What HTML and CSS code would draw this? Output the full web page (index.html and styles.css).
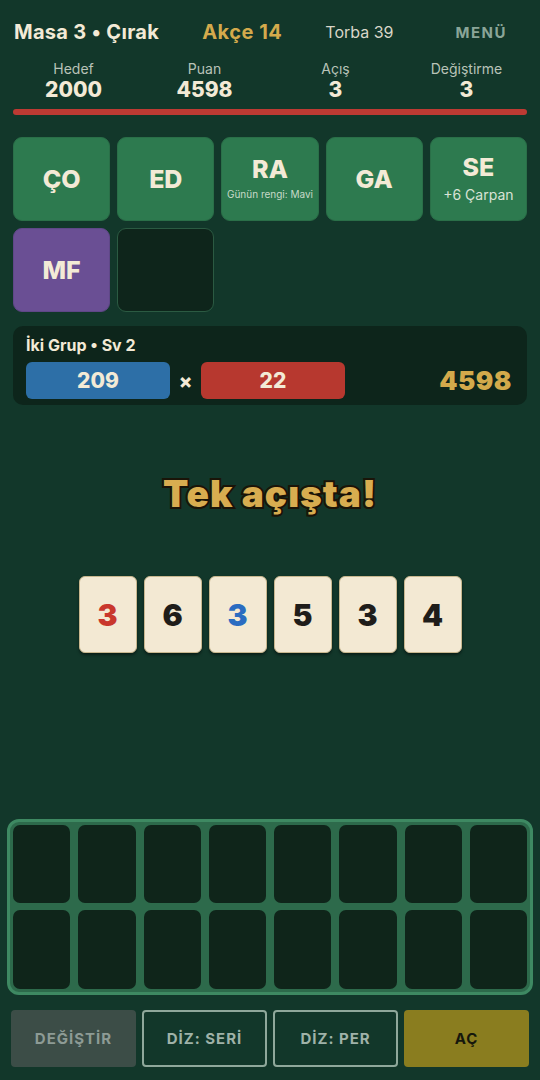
FILE: index.html
```html
<!DOCTYPE html>
<html lang="tr">
  <head>
    <meta charset="UTF-8" />
    <meta name="viewport" content="width=device-width, initial-scale=1.0" />
    <title>Masa 3</title>
    <link rel="stylesheet" href="styles.css">
  </head>
  <body>
    <main class="game">
      <header class="topbar">
        <span class="topbar__title">Masa 3 • Çırak</span>
        <span class="topbar__coins">Akçe 14</span>
        <span class="topbar__bag">Torba 39</span>
        <button type="button" class="topbar__menu">MENÜ</button>
      </header>

      <div class="stats">
        <div class="stat"><span class="stat__label">Hedef</span><span class="stat__value">2000</span></div>
        <div class="stat"><span class="stat__label">Puan</span><span class="stat__value">4598</span></div>
        <div class="stat"><span class="stat__label">Açış</span><span class="stat__value">3</span></div>
        <div class="stat"><span class="stat__label">Değiştirme</span><span class="stat__value">3</span></div>
      </div>
      <div class="progress"></div>

      <div class="jokers">
        <div class="joker">ÇO</div>
        <div class="joker">ED</div>
        <div class="joker joker--note">RA<small>Günün rengi: Mavi</small></div>
        <div class="joker">GA</div>
        <div class="joker joker--note">SE<small class="big">+6 Çarpan</small></div>
        <div class="joker joker--purple">MF</div>
        <div class="joker joker--empty"></div>
      </div>

      <section class="score">
        <div class="score__name">İki Grup • Sv 2</div>
        <div class="score__row">
          <span class="score__chips">209</span>
          <span class="score__times">×</span>
          <span class="score__mult">22</span>
          <span class="score__total">4598</span>
        </div>
      </section>

      <h1 class="banner">Tek açışta!</h1>

      <div class="played">
        <div class="tile tile--red">3</div>
        <div class="tile">6</div>
        <div class="tile tile--blue">3</div>
        <div class="tile">5</div>
        <div class="tile">3</div>
        <div class="tile">4</div>
      </div>

      <div class="rack">
        <div class="slot"></div><div class="slot"></div><div class="slot"></div><div class="slot"></div>
        <div class="slot"></div><div class="slot"></div><div class="slot"></div><div class="slot"></div>
        <div class="slot"></div><div class="slot"></div><div class="slot"></div><div class="slot"></div>
        <div class="slot"></div><div class="slot"></div><div class="slot"></div><div class="slot"></div>
      </div>

      <div class="actions">
        <button type="button" class="btn btn--muted">DEĞİŞTİR</button>
        <button type="button" class="btn btn--outline">DİZ: SERİ</button>
        <button type="button" class="btn btn--outline">DİZ: PER</button>
        <button type="button" class="btn btn--play">AÇ</button>
      </div>
    </main>
  </body>
</html>
```

FILE: styles.css
```css
body {
  margin: 0;
  background-color: #12372a;
  color: #f3ead6;
  font-family: "Inter", "Noto Sans", sans-serif;
}

button {
  font-family: inherit;
  border: none;
  cursor: pointer;
}

/* Top bar */
.topbar {
  height: 60px;
  padding: 4px 14px 0;
  box-sizing: border-box;
  display: flex;
  align-items: center;
  justify-content: space-between;
}
.topbar__title {
  font-size: 20px;
  font-weight: 700;
  letter-spacing: 0.3px;
}
.topbar__coins {
  font-size: 20px;
  font-weight: 700;
  letter-spacing: 0.5px;
  color: #d4aa4c;
}
.topbar__bag {
  font-size: 16px;
  color: #d9d6c8;
}
.topbar__menu {
  background: none;
  padding: 0 19px;
  font-size: 15px;
  font-weight: 700;
  letter-spacing: 1.5px;
  color: #8aa598;
}

/* Stats */
.stats {
  padding: 0 8px;
  display: grid;
  grid-template-columns: repeat(4, 1fr);
  text-align: center;
}
.stat {
  display: flex;
  flex-direction: column;
}
.stat__label {
  font-size: 14px;
  line-height: 18px;
  color: #b9c3b8;
}
.stat__value {
  font-size: 21px;
  line-height: 24px;
  font-weight: 800;
}
.progress {
  margin: 7px 13px 0;
  height: 6px;
  border-radius: 3px;
  background-color: #bd3a33;
}

/* Jokers */
.jokers {
  margin-top: 22px;
  padding: 0 13px;
  display: grid;
  grid-template-columns: repeat(5, 1fr);
  grid-auto-rows: 84px;
  gap: 7px;
}
.joker {
  border-radius: 9px;
  background-color: #2d7a4f;
  border: 1px solid #2a6f48;
  display: flex;
  flex-direction: column;
  align-items: center;
  justify-content: center;
  font-size: 25px;
  font-weight: 800;
}
.joker small {
  font-size: 10px;
  font-weight: 400;
  color: #c7d9c8;
  margin-top: 4px;
  white-space: nowrap;
}
.joker small.big {
  font-size: 14px;
  color: #d9e3d6;
}
.joker--note {
  padding-bottom: 4px;
}
.joker--purple {
  background-color: #6a4f94;
  border-color: #5f4787;
}
.joker--empty {
  background-color: #0e251b;
  border: 1px solid #2b5a42;
}

/* Score panel */
.score {
  margin: 14px 13px 0;
  padding: 10px 15px 6px 13px;
  background-color: #0d251b;
  border-radius: 10px;
}
.score__name {
  font-size: 16px;
  line-height: 18px;
  font-weight: 700;
}
.score__row {
  margin-top: 8px;
  display: flex;
  align-items: center;
}
.score__chips,
.score__mult {
  width: 144px;
  height: 37px;
  border-radius: 6px;
  display: flex;
  align-items: center;
  justify-content: center;
  font-size: 21px;
  font-weight: 800;
}
.score__chips {
  background-color: #2d6fa7;
}
.score__mult {
  background-color: #b7382f;
}
.score__times {
  width: 31px;
  text-align: center;
  font-size: 20px;
  font-weight: 800;
}
.score__total {
  margin-left: auto;
  font-size: 26px;
  font-weight: 900;
  letter-spacing: 0.5px;
  color: #d3aa4b;
}

/* Banner */
.banner {
  margin: 67px 0 0;
  text-align: center;
  font-size: 37px;
  line-height: 44px;
  font-weight: 900;
  letter-spacing: 1px;
  color: #d8ad50;
  -webkit-text-stroke: 4px #1a1408;
  paint-order: stroke fill;
  text-shadow: 0 2px 0 #1a1408;
}

/* Played tiles */
.played {
  margin-top: 60px;
  display: flex;
  justify-content: center;
  gap: 7px;
}
.tile {
  width: 58px;
  height: 77px;
  box-sizing: border-box;
  border-radius: 6px;
  background-color: #f3e9d3;
  border: 1px solid #c8b78e;
  box-shadow: 0 2px 3px rgba(0, 0, 0, 0.45);
  display: flex;
  align-items: center;
  justify-content: center;
  font-size: 30px;
  font-weight: 900;
  color: #1f1d1a;
}
.tile--red {
  color: #c9372c;
}
.tile--blue {
  color: #2a6cc1;
}

/* Rack */
.rack {
  margin: 166px 7px 0;
  padding: 3px;
  border: 3px solid #3e8962;
  border-radius: 12px;
  background-color: #2d6a4b;
  display: grid;
  grid-template-columns: repeat(8, 1fr);
  grid-template-rows: 78px 79px;
  gap: 7px 8px;
}
.slot {
  border-radius: 7px;
  background-color: #0f251a;
}

/* Action buttons */
.actions {
  margin-top: 15px;
  padding: 0 11px;
  display: grid;
  grid-template-columns: repeat(4, 1fr);
  gap: 6px;
}
.btn {
  height: 57px;
  border-radius: 4px;
  font-size: 15px;
  font-weight: 700;
  letter-spacing: 1px;
}
.btn--muted {
  background-color: #3c4d47;
  color: #8d9b95;
}
.btn--outline {
  background: none;
  border: 2px solid #8fa89b;
  color: #9fb2a8;
}
.btn--play {
  background-color: #8a7d1f;
  color: #15170c;
}
```
